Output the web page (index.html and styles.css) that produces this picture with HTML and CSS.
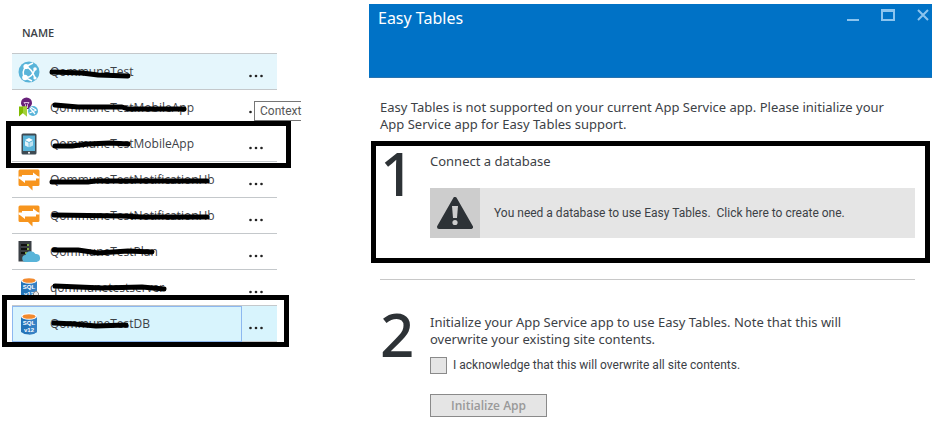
FILE: index.html
```html
<!DOCTYPE html>
<html lang="en">
<head>
    <meta charset="UTF-8">
    <meta name="viewport" content="width=device-width, initial-scale=1.0">
    <title>Easy Tables</title>
    <link rel="stylesheet" href="styles.css">
</head>
<body>
    <!-- Shared icons -->
    <svg class="sprite" aria-hidden="true">
        <symbol id="dots" viewBox="0 0 16 4">
            <circle cx="2.5" cy="2" r="1.3"/><circle cx="8" cy="2" r="1.3"/><circle cx="13.5" cy="2" r="1.3"/>
        </symbol>
        <symbol id="web" viewBox="0 0 22 22">
            <circle cx="11" cy="11" r="10.5" fill="#59b4d9"/>
            <path d="M8 5.500C12 7 15 11 17 17M8 5.500C5 9 4 13 7 16.500M7 16.500C11 17 15 14 17 8M8 5.500L15 2M7 16.500L14 20" fill="none" stroke="#fff" stroke-width="1.5"/>
            <circle cx="8" cy="5.500" r="2.600" fill="#fff"/><circle cx="7" cy="16.500" r="2.800" fill="#fff"/><circle cx="17" cy="8" r="1.800" fill="#fff"/><circle cx="17" cy="17" r="1.600" fill="#fff"/>
        </symbol>
        <symbol id="insights" viewBox="0 0 22 22">
            <path d="M3 6a5.500 5.500 0 0 1 11 0c0 3-2.500 3.500-2.500 6h-6C5.500 9.500 3 9 3 6z" fill="#68217a"/>
            <path d="M7.500 11V7.500L6 5.500h5L9.500 7.500V11" fill="none" stroke="#d9b8e0" stroke-width="1"/>
            <path d="M1 9.500h8v10L5 16l-4 3.500z" fill="#7fba00"/>
            <path d="M5 9.500h4v10L5 16z" fill="#a4d13a"/>
            <circle cx="15" cy="14" r="5" fill="#59b4d9"/>
            <path d="M12 11l5 6M11.500 16l7-3M13 10l5 3" stroke="#fff" stroke-width="1.2"/>
        </symbol>
        <symbol id="mobile" viewBox="0 0 22 22">
            <rect x="3.500" y=".5" width="15" height="21" rx="1.5" fill="#3e4a52"/>
            <rect x="5" y="2.500" width="12" height="15.500" fill="#59b4d9"/>
            <path d="M11 5l4 2-4 2-4-2z" fill="#fff"/>
            <path d="M7 8l3.600 1.800v4.400L7 12.400z" fill="#e3f3fa"/>
            <path d="M15 8l-3.600 1.800v4.400l3.600-1.800z" fill="#bfe3f2"/>
            <circle cx="11" cy="19.800" r="1" fill="#fff"/>
        </symbol>
        <symbol id="hub" viewBox="0 0 22 22">
            <path d="M2 .5h18q1.500 0 1.500 1.500v13.500q0 1.500-1.500 1.500h-5.500V21.500L10 17H2Q.5 17 .5 15.500V2Q.5 .5 2 .5z" fill="#f7951e"/>
            <path d="M.5 7.500H21.500V9.500H.5z" fill="#fff"/>
            <path d="M4 6h11V3.500l6.500 5H4zM18 11.500H7v2.500L.5 9H18z" fill="#fff"/>
        </symbol>
        <symbol id="plan" viewBox="0 0 22 22">
            <rect x=".5" width="13" height="20.500" fill="#3a3f44"/>
            <path d="M3 4h6M3 8h6M3 12h4" stroke="#111" stroke-width="2"/>
            <path d="M9 4h2M9 8h2M7 12h2" stroke="#9bd04a" stroke-width="1.5"/>
            <path d="M8 21a3.500 3.500 0 0 1-.5-7 5.500 5.500 0 0 1 10-1 4 4 0 0 1 1 8z" fill="#59b4d9"/>
        </symbol>
        <symbol id="sql" viewBox="0 0 22 22">
            <path d="M3 3h16v16q-3 2.500-8 2.500T3 19z" fill="#2474b8"/>
            <path d="M11 3h8v16q-3 2.500-8 2.500z" fill="#3581c4"/>
            <ellipse cx="11" cy="3.500" rx="8" ry="3.200" fill="#fff"/>
            <ellipse cx="11" cy="3.500" rx="6.500" ry="2.300" fill="#f28a2e"/>
        </symbol>
    </svg>

    <!-- Resource list -->
    <section class="resources">
        <table>
            <thead>
                <tr><th colspan="2">NAME</th></tr>
            </thead>
            <tbody>
                <tr class="hovered">
                    <td><div class="name"><svg class="icon"><use href="#web"/></svg><span>QommuneTest</span></div>
                        <svg class="scribble"><path d="M40 18L70 19L86 21L116 22"/></svg></td>
                    <td class="more"><button aria-label="More"><svg><use href="#dots"/></svg></button></td>
                </tr>
                <tr>
                    <td><div class="name"><svg class="icon"><use href="#insights"/></svg><span>QommuneTestMobileApp</span></div>
                        <svg class="scribble"><path d="M43 15L66 17L110 17L116 19L172 19"/></svg></td>
                    <td class="more"><button aria-label="More"><svg><use href="#dots"/></svg></button><span class="tooltip">Context</span></td>
                </tr>
                <tr class="marked">
                    <td><div class="name"><svg class="icon"><use href="#mobile"/></svg><span>QommuneTestMobileApp</span></div>
                        <svg class="scribble"><path d="M43 20H60L76 18L98 17L116 18"/></svg></td>
                    <td class="more"><button aria-label="More"><svg><use href="#dots"/></svg></button></td>
                </tr>
                <tr>
                    <td><div class="name"><svg class="icon"><use href="#hub"/></svg><span>QommuneTestNotificationHb</span></div>
                        <svg class="scribble"><path d="M40 20H76L82 19H195"/></svg></td>
                    <td class="more"><button aria-label="More"><svg><use href="#dots"/></svg></button></td>
                </tr>
                <tr>
                    <td><div class="name"><svg class="icon"><use href="#hub"/></svg><span>QommuneTestNotificationHb</span></div>
                        <svg class="scribble"><path d="M42 17L110 18L130 19H195"/></svg></td>
                    <td class="more"><button aria-label="More"><svg><use href="#dots"/></svg></button></td>
                </tr>
                <tr>
                    <td><div class="name"><svg class="icon"><use href="#plan"/></svg><span>QommuneTestPlan</span></div>
                        <svg class="scribble"><path d="M42 16H66L86 19L116 17L140 18"/></svg></td>
                    <td class="more"><button aria-label="More"><svg><use href="#dots"/></svg></button></td>
                </tr>
                <tr>
                    <td><div class="name">
                            <svg class="icon" viewBox="0 0 22 22"><use href="#sql"/><text x="11" y="12" class="sql-text">SQL</text><text x="11" y="19" class="sql-text">v12</text><path d="M15.500 21v-5l2.500-2 2.500 2v5z" fill="#e8e8e8" stroke="#888"/></svg>
                            <span>qommunetestserver</span>
                        </div>
                        <svg class="scribble"><path d="M43 16L90 18L130 17L152 19"/></svg></td>
                    <td class="more"><button aria-label="More"><svg><use href="#dots"/></svg></button></td>
                </tr>
                <tr class="marked selected">
                    <td><div class="name">
                            <svg class="icon" viewBox="0 0 22 22"><use href="#sql"/><text x="11" y="12" class="sql-text">SQL</text><text x="11" y="19" class="sql-text">v12</text></svg>
                            <span>QommuneTestDB</span>
                        </div>
                        <svg class="scribble"><path d="M42 17L62 18L84 20L114 19"/></svg></td>
                    <td class="more"><button aria-label="More"><svg><use href="#dots"/></svg></button></td>
                </tr>
            </tbody>
        </table>
    </section>

    <!-- Easy Tables blade -->
    <main class="blade">
        <header>
            <h1>Easy Tables</h1>
            <div class="controls">
                <button aria-label="Minimize"><svg viewBox="0 0 14 14"><path d="M1 12h12"/></svg></button>
                <button aria-label="Maximize"><svg viewBox="0 0 14 14"><path d="M1 3v9h12V3M0 3h14M0 2h14"/></svg></button>
                <button aria-label="Close"><svg viewBox="0 0 14 14"><path d="M2 2l10 10M12 2L2 12"/></svg></button>
            </div>
        </header>

        <p class="intro">Easy Tables is not supported on your current App Service app. Please initialize your App Service app for Easy Tables support.</p>

        <section class="step boxed">
            <div class="number">1</div>
            <div class="content">
                <h2>Connect a database</h2>
                <a class="alert" href="#">
                    <span class="alert-icon">
                        <svg viewBox="0 0 36 32"><path d="M18 2L34 30H2z" fill="#2d3236" stroke="#2d3236" stroke-width="4" stroke-linejoin="round"/><path d="M15 9h6l-1 12h-4z" fill="#cdcdcd"/><circle cx="18" cy="25.500" r="2.600" fill="#cdcdcd"/></svg>
                    </span>
                    <span class="alert-text">You need a database to use Easy Tables.&nbsp; Click here to create one.</span>
                </a>
            </div>
        </section>

        <hr>

        <section class="step">
            <div class="number">2</div>
            <div class="content">
                <h2>Initialize your App Service app to use Easy Tables. Note that this will overwrite your existing site contents.</h2>
                <div class="check">
                    <input type="checkbox" id="ack">
                    <label for="ack">I acknowledge that this will overwrite all site contents.</label>
                </div>
                <button class="init" disabled>Initialize App</button>
            </div>
        </section>
    </main>
</body>
</html>
```
FILE: styles.css
```css
* {
    box-sizing: border-box;
}

body {
    display: grid;
    grid-template-columns: 369fr 563fr;
    margin: 0;
    padding-right: 7px;
    font-family: "Noto Sans", "Open Sans", sans-serif;
    font-size: 13px;
    line-height: 17px;
    color: #3c4146;
    background: #fff;
}

button {
    font-family: inherit;
    padding: 0;
    border: none;
    background: none;
}

.sprite {
    position: absolute;
    width: 0;
    height: 0;
}

.sql-text {
    font-family: "Liberation Sans", sans-serif;
    font-size: 6px;
    font-weight: bold;
    text-anchor: middle;
    fill: #fff;
}

/* Resource list */
.resources {
    padding: 0 92px 0 12px;
}

table {
    width: 100%;
    border-spacing: 0;
    font-family: "Open Sans", sans-serif;
    font-size: 12px;
}

th {
    height: 54px;
    padding: 12px 10px 0;
    border-bottom: 1px solid #c4c8cb;
    font-size: 11px;
    font-weight: 600;
    text-align: left;
}

tbody tr {
    position: relative;
}

td {
    position: relative;
    height: 36px;
    padding: 0;
    border-bottom: 1px solid #c4c8cb;
}

.name {
    display: flex;
    align-items: center;
    gap: 10px;
    padding-left: 6px;
}

.icon {
    width: 22px;
    height: 22px;
}

.more {
    width: 35px;
}

.more button {
    display: block;
    padding: 9px 0 0 6px;
}

.more svg {
    display: block;
    width: 16px;
    height: 4px;
    fill: #222;
}

.hovered {
    background: #e5f6fc;
}

.selected {
    background: #d8f4fd;
}

.selected td:first-child {
    outline: 1px solid #8db8f0;
    outline-offset: -1px;
}

.scribble {
    position: absolute;
    top: 0;
    left: 0;
    width: 100%;
    height: 100%;
    fill: none;
    stroke: #000;
    stroke-width: 5;
    stroke-linecap: round;
    stroke-linejoin: round;
    pointer-events: none;
}

/* Hand-drawn frames round the rows to look at */
.marked::after {
    content: "";
    position: absolute;
    z-index: 2;
    inset: -5px -14px -6px -6px;
    border: 5px solid #000;
    pointer-events: none;
}

.selected::after {
    inset: -11px -12px -5px -10px;
}

.tooltip {
    position: absolute;
    z-index: 1;
    top: 11px;
    left: 12px;
    padding-left: 5px;
    border: 1px solid #767676;
    border-right: none;
    background: #fff;
    color: #575757;
    font-family: Roboto, sans-serif;
    line-height: 18px;
}

/* Blade */
header {
    display: flex;
    justify-content: space-between;
    height: 74px;
    margin-top: 4px;
    padding: 3px 2px 0 9px;
    border-bottom: 1px solid #2a73ae;
    background: #0072c6;
}

h1 {
    margin: 0;
    font-size: 16px;
    font-weight: normal;
    line-height: 22px;
    color: #fff;
}

.controls {
    display: flex;
    gap: 21px;
    height: 14px;
    margin-top: 1px;
}

.controls svg {
    display: block;
    width: 14px;
    height: 14px;
    fill: none;
    stroke: #8cc4ee;
    stroke-width: 2;
}

.intro {
    margin: 21px 30px 8px 11px;
}

.step {
    display: flex;
    padding: 0 17px 0 11px;
}

.boxed {
    margin: 0 2px;
    padding: 7px 10px 20px 4px;
    border: 5px solid #000;
}

.number {
    width: 50px;
    font-size: 60px;
    font-weight: 500;
    line-height: 40px;
    color: #2d3236;
}

.content {
    flex: 1;
}

h2 {
    margin: 0;
    padding-right: 20px;
    font-size: 13px;
    font-weight: normal;
}

.alert {
    display: flex;
    align-items: center;
    margin-top: 18px;
    background: #e5e5e5;
    color: inherit;
    font-family: Roboto, sans-serif;
    font-size: 12px;
    text-decoration: none;
}

.alert-icon {
    display: grid;
    place-items: center;
    width: 50px;
    height: 50px;
    background: #cdcdcd;
}

.alert-icon svg {
    width: 36px;
    height: 32px;
}

.alert-text {
    padding-left: 14px;
}

hr {
    margin: 16px 17px 34px 11px;
    border: none;
    border-top: 1px solid #c8c8c8;
}

.check {
    display: flex;
    align-items: center;
    gap: 6px;
    margin-top: 9px;
    font-family: Roboto, sans-serif;
    font-size: 12px;
}

.check input {
    appearance: none;
    width: 17px;
    height: 17px;
    margin: 0;
    border: 1px solid #8a8a8a;
    background: #e5e5e5;
}

.init {
    margin-top: 20px;
    padding: 0 20px;
    border: 1px solid #8a8a8a;
    background: #e5e5e5;
    color: #999;
    font-family: "Open Sans", sans-serif;
    font-size: 12px;
    font-weight: 600;
    line-height: 21px;
}
```
